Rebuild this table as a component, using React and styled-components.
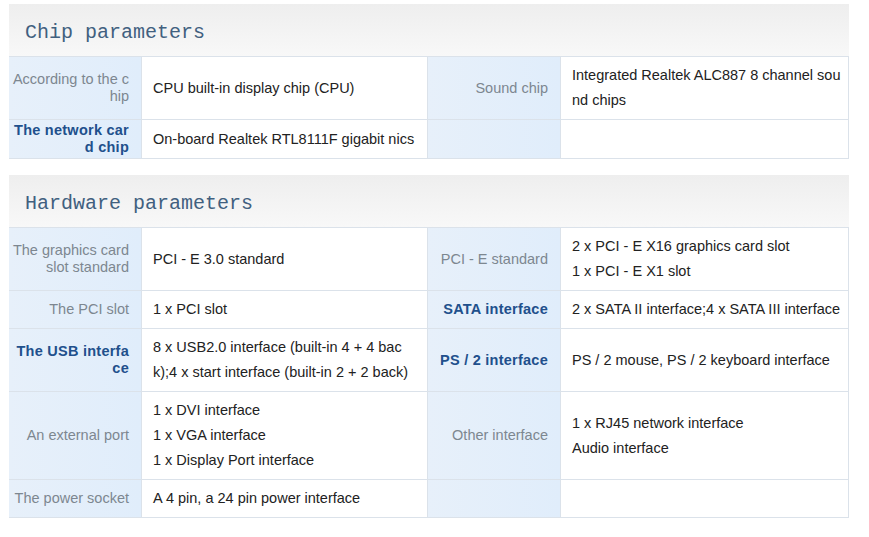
import React from 'react';
import styled, { createGlobalStyle } from 'styled-components';

const GlobalStyle = createGlobalStyle`
  html, body {
    margin: 0;
    background: #fff;
  }
  body {
    font-family: 'Liberation Sans', Arial, sans-serif;
  }
`;

const chip = [
  {
    label: 'According to the chip',
    value: ['CPU built-in display chip (CPU)'],
    label2: 'Sound chip',
    value2: ['Integrated Realtek ALC887 8 channel sou', 'nd chips'],
  },
  {
    label: 'The network card chip',
    strong: true,
    value: ['On-board Realtek RTL8111F gigabit nics'],
    label2: '',
    value2: [],
  },
];

const hardware = [
  {
    label: 'The graphics card slot standard',
    value: ['PCI - E 3.0 standard'],
    label2: 'PCI - E standard',
    value2: ['2 x PCI - E X16 graphics card slot', '1 x PCI - E X1 slot'],
  },
  {
    label: 'The PCI slot',
    value: ['1 x PCI slot'],
    label2: 'SATA interface',
    strong2: true,
    value2: ['2 x SATA II interface;4 x SATA III interface'],
  },
  {
    label: 'The USB interface',
    strong: true,
    value: ['8 x USB2.0 interface (built-in 4 + 4 bac', 'k);4 x start interface (built-in 2 + 2 back)'],
    label2: 'PS / 2 interface',
    strong2: true,
    value2: ['PS / 2 mouse, PS / 2 keyboard interface'],
  },
  {
    label: 'An external port',
    value: ['1 x DVI interface', '1 x VGA interface', '1 x Display Port interface'],
    label2: 'Other interface',
    value2: ['1 x RJ45 network interface', 'Audio interface'],
  },
  {
    label: 'The power socket',
    value: ['A 4 pin, a 24 pin power interface'],
    label2: '',
    value2: [],
  },
];

const Section = ({ title, rows }) => (
  <SectionWrapper>
    <Heading>{title}</Heading>
    <Grid>
      {rows.map((row, i) => (
        <React.Fragment key={i}>
          <LabelCell $strong={row.strong}>{row.label}</LabelCell>
          <ValueCell>
            {row.value.map((line) => (
              <div key={line}>{line}</div>
            ))}
          </ValueCell>
          <LabelCell $strong={row.strong2}>{row.label2}</LabelCell>
          <ValueCell>
            {row.value2.map((line) => (
              <div key={line}>{line}</div>
            ))}
          </ValueCell>
        </React.Fragment>
      ))}
    </Grid>
  </SectionWrapper>
);

const App = () => (
  <>
    <GlobalStyle />
    <Page>
      <Section title="Chip parameters" rows={chip} />
      <Section title="Hardware parameters" rows={hardware} />
    </Page>
  </>
);

// styled components
const Page = styled.div`
  width: 840px;
  padding: 4px 0 0 9px;
  display: flex;
  flex-direction: column;
  gap: 16px;
`;

const SectionWrapper = styled.section`
  display: flex;
  flex-direction: column;
`;

const Heading = styled.h2`
  margin: 0;
  height: 52px;
  box-sizing: border-box;
  display: flex;
  align-items: center;
  padding: 4px 0 0 16px;
  background: linear-gradient(to bottom, #eeeeee, #f8f8f8);
  font-family: 'Liberation Mono', 'DejaVu Sans Mono', monospace;
  font-weight: normal;
  font-size: 20px;
  color: #41607f;
`;

const Grid = styled.div`
  display: grid;
  grid-template-columns: 133px 286px 133px 288px;
  border-top: 1px solid #dbe2ea;
`;

const LabelCell = styled.div`
  display: flex;
  align-items: center;
  justify-content: flex-end;
  text-align: right;
  padding: 2px 12px 2px 3px;
  background: linear-gradient(to right, #e7f0fa, #e0edfb);
  border-right: 1px solid #dbe2ea;
  border-bottom: 1px solid #dbe2ea;
  font-size: 14.5px;
  line-height: 17px;
  word-break: break-all;
  color: ${(p) => (p.$strong ? '#21508c' : '#7d8790')};
  font-weight: ${(p) => (p.$strong ? 700 : 400)};
  letter-spacing: ${(p) => (p.$strong ? '0.25px' : '0')};
`;

const ValueCell = styled.div`
  display: flex;
  flex-direction: column;
  justify-content: center;
  padding: 6px 4px 6px 11px;
  background: #fff;
  border-right: 1px solid #dbe2ea;
  border-bottom: 1px solid #dbe2ea;
  font-size: 14.5px;
  line-height: 25px;
  white-space: nowrap;
  color: #222;
`;

export default App;
